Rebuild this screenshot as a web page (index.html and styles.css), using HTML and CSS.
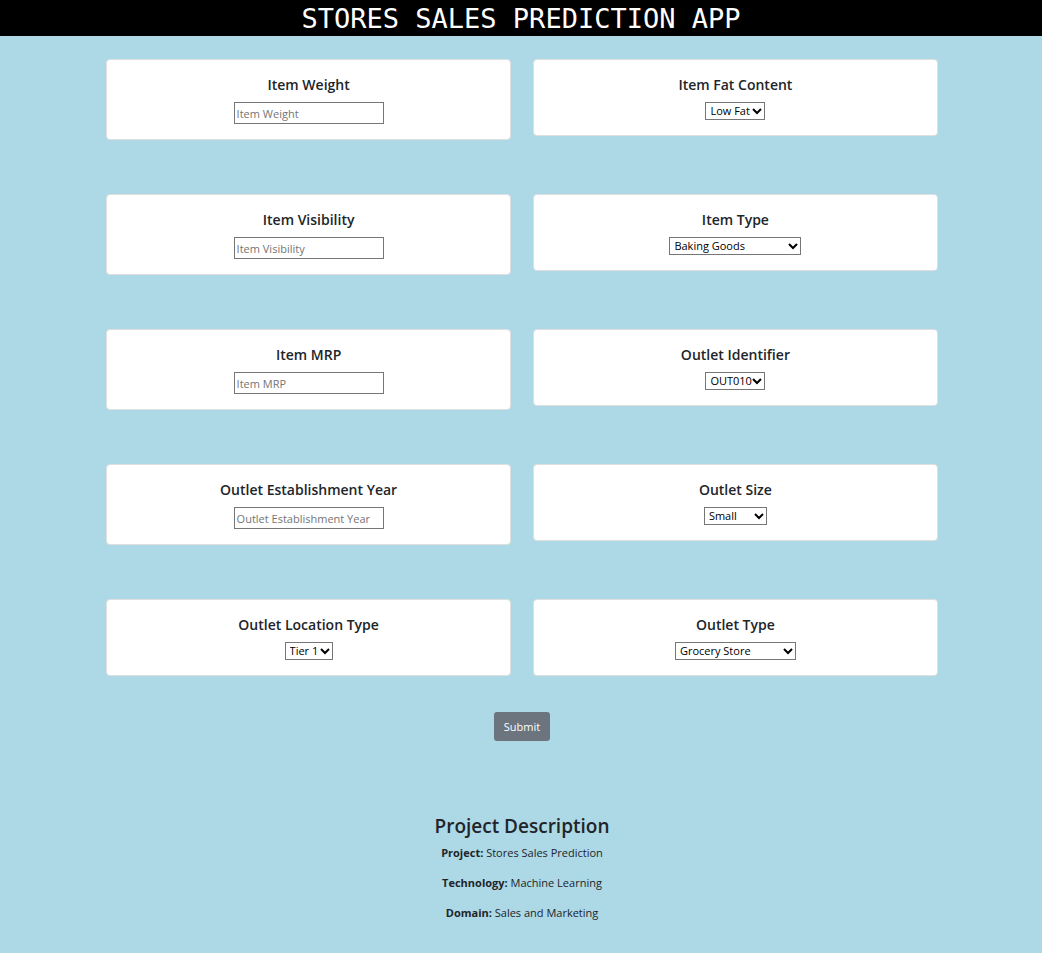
FILE: index.html
```html
<!DOCTYPE html>
<html lang="en">
<head>
<meta charset="utf-8">
<meta name="viewport" content="width=device-width, initial-scale=1">
<title>Stores Sales Prediction App</title>
<link rel="stylesheet" href="styles.css">
</head>
<body>
<header class="banner"><h1 class="banner-title">STORES SALES PREDICTION APP</h1></header>
<main class="page">
  <form class="form">
    <div class="fields">
      <div class="card">
        <label class="card-title" for="weight">Item Weight</label>
        <input class="text-input" id="weight" type="text" placeholder="Item Weight">
      </div>
      <div class="card">
        <label class="card-title" for="fat">Item Fat Content</label>
        <select class="select select-s" id="fat"><option>Low Fat</option><option>Regular</option></select>
      </div>
      <div class="card">
        <label class="card-title" for="visibility">Item Visibility</label>
        <input class="text-input" id="visibility" type="text" placeholder="Item Visibility">
      </div>
      <div class="card">
        <label class="card-title" for="type">Item Type</label>
        <select class="select select-l" id="type"><option>Baking Goods</option><option>Breads</option><option>Dairy</option></select>
      </div>
      <div class="card">
        <label class="card-title" for="mrp">Item MRP</label>
        <input class="text-input" id="mrp" type="text" placeholder="Item MRP">
      </div>
      <div class="card">
        <label class="card-title" for="outlet">Outlet Identifier</label>
        <select class="select select-s" id="outlet"><option>OUT010</option><option>OUT013</option></select>
      </div>
      <div class="card">
        <label class="card-title" for="year">Outlet Establishment Year</label>
        <input class="text-input" id="year" type="text" placeholder="Outlet Establishment Year">
      </div>
      <div class="card">
        <label class="card-title" for="size">Outlet Size</label>
        <select class="select select-m" id="size"><option>Small</option><option>Medium</option><option>High</option></select>
      </div>
      <div class="card">
        <label class="card-title" for="location">Outlet Location Type</label>
        <select class="select select-xs" id="location"><option>Tier 1</option><option>Tier 2</option><option>Tier 3</option></select>
      </div>
      <div class="card">
        <label class="card-title" for="outlet-type">Outlet Type</label>
        <select class="select select-store" id="outlet-type"><option>Grocery Store</option><option>Supermarket</option></select>
      </div>
    </div>
    <button class="submit" type="submit">Submit</button>
  </form>
  <section class="about">
    <h2 class="about-title">Project Description</h2>
    <p class="about-line"><b>Project:</b> Stores Sales Prediction</p>
    <p class="about-line"><b>Technology:</b> Machine Learning</p>
    <p class="about-line"><b>Domain:</b> Sales and Marketing</p>
  </section>
</main>
</body>
</html>
```
FILE: styles.css
```css
* { box-sizing: border-box; }

body {
  margin: 0;
  background: #add8e6;
  color: #212529;
  font: 11px/18px "Open Sans", "Noto Sans", sans-serif;
}

.banner {
  padding: 3px 16px 1px;
  background: #000;
  color: #fff;
  text-align: center;
}

.banner-title {
  margin: 0;
  font: 400 27px/32px "DejaVu Sans Mono", monospace;
}

.page {
  width: 80%;
  margin: 0 auto;
  padding: 23px 0 32px 2px;
}

.form {
  display: flex;
  flex-direction: column;
  align-items: center;
}

.fields {
  display: grid;
  grid-template-columns: 1fr 1fr;
  align-items: start;
  gap: 54px 22px;
  width: 100%;
}

.card {
  display: flex;
  flex-direction: column;
  align-items: center;
  gap: 8px;
  padding: 16px 16px 15px;
  border: 1px solid #dfdfdf;
  border-radius: 4px;
  background: #fff;
}

.card-title {
  font-size: 14px;
  font-weight: 600;
}

.text-input {
  width: 150px;
  height: 22px;
  padding: 1px 2px;
  border: 1px solid #767676;
  background: #fff;
  font: inherit;
}

.text-input::placeholder { color: #757575; }

.select {
  appearance: none;
  height: 18px;
  padding: 0 0 0 4px;
  border: 1px solid #767676;
  border-radius: 0;
  background: #fff url("data:image/svg+xml,%3Csvg xmlns='http://www.w3.org/2000/svg' width='10' height='8' viewBox='0 0 10 8'%3E%3Cpath d='M1 2l4 4 4-4' fill='none' stroke='%23000' stroke-width='2'/%3E%3C/svg%3E") no-repeat right 2px center;
  color: #000;
  font: inherit;
  line-height: 16px;
}

.select-xs { width: 48px; }
.select-s { width: 60px; }
.select-m { width: 63px; }
.select-store { width: 121px; }
.select-l { width: 132px; }

.submit {
  margin-top: 36px;
  padding: 5px 10px 4px;
  border: 0;
  border-radius: 3px;
  background: #6c757d;
  color: #fff;
  font: inherit;
  line-height: 20px;
}

.about {
  margin-top: 72px;
  text-align: center;
}

.about-title {
  margin: 0 0 5px;
  font-size: 19px;
  font-weight: 600;
  line-height: 26px;
}

.about-line { margin: 0 0 12px; }
```
